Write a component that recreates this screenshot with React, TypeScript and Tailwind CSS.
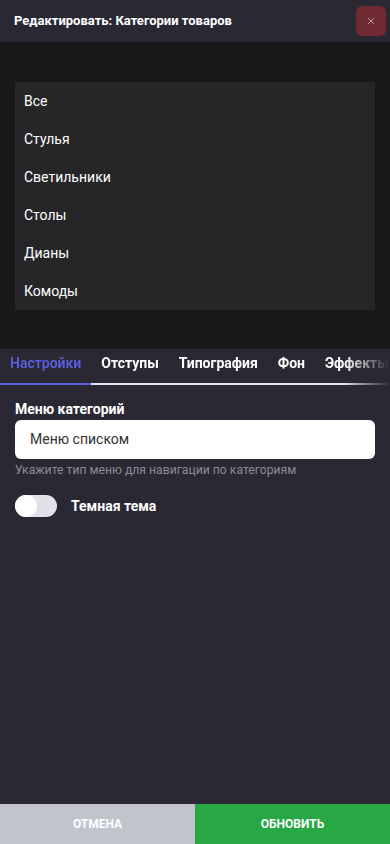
import { X } from "lucide-react";

const categories = ["Все", "Стулья", "Светильники", "Столы", "Дианы", "Комоды"];
const tabs = ["Настройки", "Отступы", "Типография", "Фон", "Эффекты"];

export default function App() {
  return (
    <div className="w-[390px] h-[844px] flex flex-col bg-[#2a2833] font-['Roboto',sans-serif] overflow-hidden">
      {/* Header */}
      <div className="h-[42px] shrink-0 flex items-center justify-between pl-[14px] pr-[4px]">
        <h1 className="text-white font-bold text-[13px]">Редактировать: Категории товаров</h1>
        <button className="w-[30px] h-[30px] rounded-md bg-[#6f2a33] flex items-center justify-center">
          <X size={12} strokeWidth={1.5} className="text-[#c9c2c6]" />
        </button>
      </div>

      {/* Preview */}
      <div className="h-[307px] shrink-0 bg-[#181818] pt-[40px] px-[15px]">
        <div className="bg-[#262629]">
          {categories.map((c) => (
            <div key={c} className="h-[38px] flex items-center px-[9px] text-white text-[14px]">
              {c}
            </div>
          ))}
        </div>
      </div>

      {/* Tabs */}
      <div className="relative shrink-0 h-[36px] flex items-end">
        <div className="flex w-full whitespace-nowrap [mask-image:linear-gradient(to_right,black_88%,transparent_100%)]">
          {tabs.map((t, i) => (
            <div
              key={t}
              className={
                i === 0
                  ? "px-[10px] pb-[9px] text-[14px] font-semibold text-[#5a5ee0] border-b-2 border-[#5a5ee0]"
                  : "px-[10px] pb-[9px] text-[14px] font-bold text-white border-b-2 border-[#e4e4ea]"
              }
            >
              {t}
            </div>
          ))}
          <div className="flex-1 border-b-2 border-[#e4e4ea]" />
        </div>
      </div>

      {/* Settings */}
      <div className="flex-1 px-[15px] pt-[14px]">
        <label className="block text-white font-bold text-[14px] leading-[20px] mb-[1px]">Меню категорий</label>
        <div className="h-[39px] bg-white rounded-md flex items-center px-[15px] text-[14px] text-[#333]">
          Меню списком
        </div>
        <p className="mt-[3px] text-[12.2px] leading-[16px] text-[#8b8b95]">
          Укажите тип меню для навигации по категориям
        </p>
        <div className="mt-[17px] flex items-center gap-[14px]">
          <div className="w-[42px] h-[22px] rounded-full bg-[#e1e1ea] flex items-center">
            <div className="w-[22px] h-[22px] rounded-full bg-white" />
          </div>
          <span className="text-white font-bold text-[14px]">Темная тема</span>
        </div>
      </div>

      {/* Footer */}
      <div className="h-[40px] shrink-0 flex">
        <button className="w-1/2 bg-[#c1c3cd] text-white font-bold text-[12px] uppercase">Отмена</button>
        <button className="w-1/2 bg-[#27a844] text-white font-bold text-[12px] uppercase">Обновить</button>
      </div>
    </div>
  );
}
